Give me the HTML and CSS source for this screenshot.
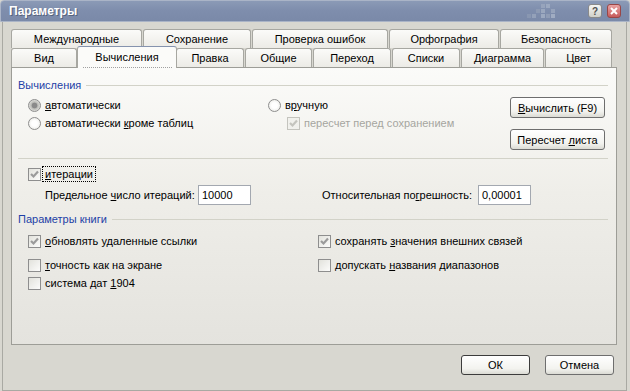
FILE: index.html
```html
<!DOCTYPE html>
<html>
<head>
<meta charset="utf-8" />
<title>Параметры</title>
<link rel="stylesheet" href="styles.css">
</head>
<body>
<!-- title bar -->
<div class="titlebar">
 <span class="title">Параметры</span>
 <svg class="checker" width="28" height="14" viewBox="0 0 28 14">
  <rect x="14" y="0" width="4" height="4" fill="#97a4bc"/>
  <rect x="19" y="0" width="4" height="4" fill="#9ca9c0"/>
  <rect x="9" y="5" width="4" height="4" fill="#8d9ab3"/>
  <rect x="14" y="5" width="4" height="4" fill="#9aa7be"/>
  <rect x="24" y="5" width="4" height="4" fill="#96a3bb"/>
  <rect x="0" y="10" width="4" height="4" fill="#8997b1"/>
  <rect x="5" y="10" width="4" height="4" fill="#94a1b9"/>
  <rect x="14" y="10" width="4" height="4" fill="#9ca9c0"/>
  <rect x="19" y="10" width="4" height="4" fill="#8f9cb5"/>
  <rect x="24" y="10" width="4" height="4" fill="#a0acc2"/>
 </svg>
 <span class="tbtn help">?</span>
 <span class="tbtn close">
  <svg width="8" height="8" viewBox="0 0 8 8"><path d="M1 1 L7 7 M7 1 L1 7" stroke="#fff" stroke-width="2"/></svg>
 </span>
</div>

<div class="frame">
 <!-- tabs -->
 <div class="tabs tabs-back">
  <div class="tab">Международные</div>
  <div class="tab">Сохранение</div>
  <div class="tab">Проверка ошибок</div>
  <div class="tab">Орфография</div>
  <div class="tab">Безопасность</div>
 </div>
 <div class="tabs tabs-front">
  <div class="tab">Вид</div>
  <div class="tab active">Вычисления</div>
  <div class="tab">Правка</div>
  <div class="tab">Общие</div>
  <div class="tab">Переход</div>
  <div class="tab">Списки</div>
  <div class="tab">Диаграмма</div>
  <div class="tab">Цвет</div>
 </div>

 <div class="panel">
  <div class="group-head">Вычисления</div>
  <div class="calc">
   <div class="calc-col">
    <div class="opt"><span class="radio on"></span><span><u>а</u>втоматически</span></div>
    <div class="opt"><span class="radio"></span><span>автоматически <u>к</u>роме таблиц</span></div>
   </div>
   <div class="calc-col manual">
    <div class="opt"><span class="radio"></span><span>в<u>р</u>учную</span></div>
    <div class="opt sub disabled"><span class="check"><svg width="11" height="11" viewBox="0 0 11 11"><path d="M2 5 L4.5 7.5 L9 2.5"/></svg></span><span>пересчет перед сохранением</span></div>
   </div>
   <div class="calc-buttons">
    <button class="btn"><u>В</u>ычислить (F9)</button>
    <button class="btn">Пересчет <u>л</u>иста</button>
   </div>
  </div>

  <div class="sep"></div>

  <div class="opt iter"><span class="check"><svg width="11" height="11" viewBox="0 0 11 11"><path d="M2 5 L4.5 7.5 L9 2.5"/></svg></span><span class="focus"><u>и</u>терации</span></div>
  <div class="fields">
   <span class="field-label">Предельное <u>ч</u>исло итераций:</span>
   <span class="input">10000</span>
   <span class="field-label second">Относительная по<u>г</u>решность:</span>
   <span class="input">0,00001</span>
  </div>

  <div class="group-head">Параметры книги</div>
  <div class="book">
   <div class="book-col">
    <div class="opt first"><span class="check"><svg width="11" height="11" viewBox="0 0 11 11"><path d="M2 5 L4.5 7.5 L9 2.5"/></svg></span><span><u>о</u>бновлять удаленные ссылки</span></div>
    <div class="opt"><span class="check"></span><span><u>т</u>очность как на экране</span></div>
    <div class="opt"><span class="check"></span><span>система дат <u>1</u>904</span></div>
   </div>
   <div class="book-col">
    <div class="opt first"><span class="check"><svg width="11" height="11" viewBox="0 0 11 11"><path d="M2 5 L4.5 7.5 L9 2.5"/></svg></span><span>сохранять <u>з</u>начения внешних связей</span></div>
    <div class="opt"><span class="check"></span><span>допускать <u>н</u>азвания диапазонов</span></div>
   </div>
  </div>
 </div>

 <div class="footer">
  <button class="btn default">ОК</button>
  <button class="btn">Отмена</button>
 </div>
</div>
</body>
</html>
```

FILE: styles.css
```css
body {
margin:0; width:630px; height:391px; overflow:hidden;
background-color:#d8d7d0;
font-family:"Liberation Sans", Arial, sans-serif; font-size:11px; color:#000;
}
u { text-decoration:underline; text-underline-offset:1px; }

/* ---------- title bar */
.titlebar {
height:22px; box-sizing:border-box; display:flex; align-items:center;
padding:0 8px 0 8px;
background:linear-gradient(#8b9ab6, #7f8ead 45%, #7a89a8);
border:1px solid #aab4c7; border-radius:4px 4px 0 0;
}
.title { flex:1; color:#fff; font-weight:bold; font-size:12px; text-shadow:1px 1px 0 #56637d; }
.checker { margin-right:33px; }
.tbtn {
width:14px; height:14px; box-sizing:border-box; border-radius:3px;
display:flex; align-items:center; justify-content:center;
}
.help {
margin-right:5px; border:1px solid #8a8a8a;
background:linear-gradient(#f6f6f4, #d0d0ca);
color:#505050; font-weight:bold; font-size:10px;
}
.close { border:1px solid #9a4646; background:linear-gradient(#eaa3a3, #c65b5b); }

/* ---------- dialog frame */
.frame {
margin:0 3px 0 2px; height:369px; box-sizing:border-box;
border:1px solid #a9a9a3; border-top:0;
padding:7px 9px 0 8px;
}

/* ---------- tabs */
.tabs { display:grid; grid-template-rows:19px; height:19px; }
.tabs-back { grid-template-columns:132px 109px 137px 111px 113px; }
.tabs-front { grid-template-columns:67px 98px 69px 68px 79px 69px 84px 68px; align-items:end; }
.tab {
height:19px; box-sizing:border-box; margin-right:1px;
border:1px solid #a7a7a1; border-bottom:0; border-radius:3px 3px 0 0;
background:linear-gradient(#fbfbf9, #ecebe6);
text-align:center; line-height:18px; white-space:nowrap;
}
.tab.active {
position:relative; z-index:1;
height:22px; margin:0 -1px -1px -1px; line-height:20px;
background:#fbfbf9; border-top-color:#8593ae;
}
.tab.active::after {
content:""; position:absolute; left:5px; right:4px; bottom:0;
border-bottom:1px dotted #a0a0a0;
}

/* ---------- page */
.panel {
height:278px; box-sizing:border-box;
border:1px solid #9d9d97;
background:linear-gradient(#fbfbf9, #efeee9 45%, #e4e3de);
padding:10px 8px 0 6px;
}
.group-head { display:flex; align-items:center; height:14px; color:#1d3fa6; }
.group-head::after { content:""; flex:1; height:1px; margin-left:5px; background:#d2d2c8; }
.sep { height:1px; margin-top:8px; background:#d2d2c8; }

.calc { display:flex; height:54px; margin-top:4px; }
.calc-col { width:250px; padding-left:10px; box-sizing:border-box; }
.calc-col.manual { width:242px; padding-left:0; }
.calc-buttons { display:flex; flex-direction:column; gap:11px; padding-top:1px; }

.opt { display:flex; align-items:center; height:18px; white-space:nowrap; }
.opt.sub { padding-left:19px; }
.disabled { color:#a5a5a0; }

.radio {
flex:none; width:13px; height:13px; box-sizing:border-box; margin-right:4px;
border:1px solid #8e8e8e; border-radius:50%;
background:radial-gradient(circle, #fff 0, #fff 35%, #e4e4df 100%);
}
.radio.on { background:radial-gradient(circle, #8a8a8a 0, #8a8a8a 2.5px, #b9b9b5 3.2px, #dcdcd8 5.5px); }

.check {
flex:none; width:13px; height:13px; box-sizing:border-box; margin-right:4px;
border:1px solid #8e8e8e; display:flex; align-items:center; justify-content:center;
background:linear-gradient(135deg, #e2e2dc, #fcfcfb);
}
.check path { fill:none; stroke:#9b9b9b; stroke-width:2.2; }
.disabled .check { border-color:#c4c4be; background:#f1f1ed; }
.disabled .check path { stroke:#c4c4be; }

.iter { margin-top:6px; padding-left:10px; }
.focus { margin-left:-3px; padding:0 2px; line-height:14px; border:1px dotted #000; }

.fields { display:flex; align-items:center; height:20px; margin-top:2px; padding-left:27px; }
.field-label { width:153px; white-space:nowrap; }
.field-label.second { width:156px; margin-left:71px; }
.input {
width:53px; height:20px; box-sizing:border-box; padding-left:3px;
border:1px solid #a3a8b0; background-color:#fff; line-height:18px;
}
.fields + .group-head { margin-top:7px; }

.book { display:flex; margin-top:6px; padding-left:10px; }
.book-col { width:295px; }
.book .opt.first { margin-bottom:6px; }

/* ---------- buttons */
.btn {
width:95px; height:21px; box-sizing:border-box; padding:0;
border:1px solid #6e6e6e; border-radius:3px;
background:linear-gradient(#ffffff, #f3f3ef 70%, #dbdbd4);
font:inherit; color:#000; text-align:center;
}
.footer { display:flex; justify-content:flex-end; gap:15px; margin-top:10px; padding-right:3px; }
.footer .btn { width:69px; height:20px; }
.btn.default { border-color:#3c3c3c; }
```
